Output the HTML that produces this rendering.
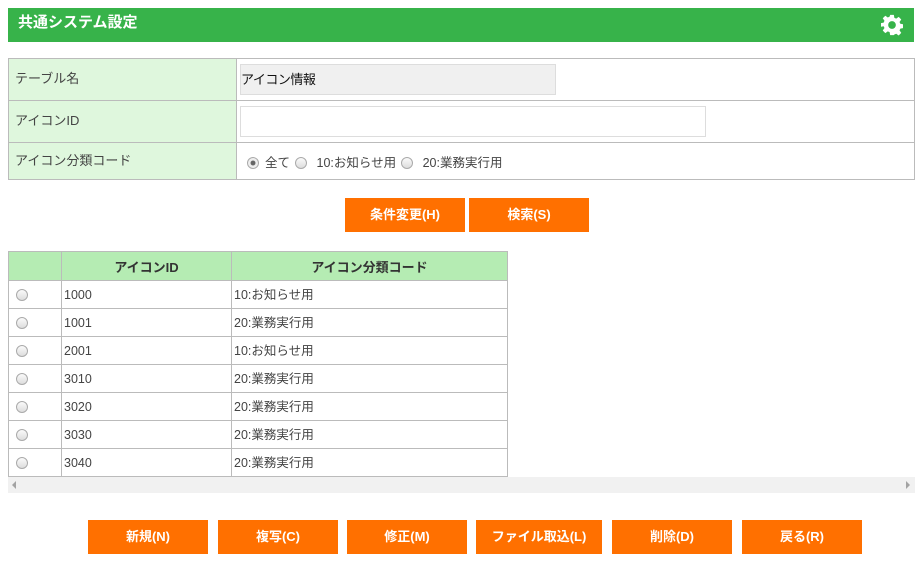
<!DOCTYPE html>
<html><head><meta charset="utf-8"><style>
*{box-sizing:border-box;margin:0;padding:0}
body{width:922px;height:566px;background:#fff;font-family:"Liberation Sans","Noto Sans CJK JP",sans-serif;font-size:13px;color:#333;position:relative;overflow:hidden}
.hdr{position:absolute;left:8px;top:8px;width:906px;height:34px;background:#37b34a;color:#fff;font-weight:bold;font-size:15px;line-height:30px;padding-left:10px}
.abs{position:absolute}
table{border-collapse:collapse}
td,th{border:1px solid #bbb;vertical-align:middle}
.form{position:absolute;left:8px;top:58px;width:907px}
.form td.l{background:#dff7dd;width:228px;padding-left:6px;padding-bottom:4px;font-size:13px;color:#444}
.btn{position:absolute;height:34px;background:#ff7000;color:#fff;font-weight:bold;font-size:13px;text-align:center;line-height:34px}
.res{position:absolute;left:8px;top:251px;width:500px}
.res th{background:#b5ecb3;height:29px;font-size:13px;color:#333}
.res td{height:28px;padding-left:2px;font-size:12.5px;color:#444;line-height:14px}
.rd{display:inline-block;width:12px;height:12px;border-radius:50%;border:1px solid #aaa;background:linear-gradient(#fafafa,#ddd);vertical-align:middle}
.opt{font-size:12.5px;color:#444}
.opt span.t{margin:0 5px 0 6px}
</style></head><body>
<div class="hdr">共通システム設定</div>
<svg class="abs" style="left:881px;top:14px" width="22" height="22" viewBox="0 0 24 24"><path fill="#fff" d="M10 1h4l.6 3.2 2 .9 2.7-1.9 2.8 2.8-1.9 2.7.9 2 3.2.6v4l-3.2.6-.9 2 1.9 2.7-2.8 2.8-2.7-1.9-2 .9L14 23h-4l-.6-3.2-2-.9-2.7 1.9-2.8-2.8 1.9-2.7-.9-2L-.3 14v-4l3.2-.6.9-2L1.9 4.7 4.7 1.9l2.7 1.9 2-.9z"/><circle cx="12" cy="12" r="4.2" fill="#37b34a"/></svg>
<table class="form">
<tr style="height:42px"><td class="l">テーブル名</td><td><div style="margin-left:3px;width:316px;height:31px;background:#f0f0f0;border:1px solid #ddd;line-height:29px;font-size:13px;color:#111;letter-spacing:-0.5px">アイコン情報</div></td></tr>
<tr style="height:42px"><td class="l">アイコンID</td><td><div style="margin-left:3px;width:466px;height:31px;border:1px solid #ddd"></div></td></tr>
<tr style="height:37px"><td class="l">アイコン分類コード</td><td class="opt" style="padding-left:10px"><span class="rd" style="background:radial-gradient(#666 30%,#eee 40%)"></span><span class="t">全て</span><span class="rd"></span><span class="t">&nbsp;10:お知らせ用</span><span class="rd"></span><span class="t">&nbsp;20:業務実行用</span></td></tr>
</table>
<div class="btn" style="left:345px;top:198px;width:120px">条件変更(H)</div>
<div class="btn" style="left:469px;top:198px;width:120px">検索(S)</div>
<table class="res">
<tr><th style="width:53px"></th><th style="width:170px">アイコンID</th><th>アイコン分類コード</th></tr>
<tr><td style="padding-left:7px"><span class="rd"></span></td><td>1000</td><td>10:お知らせ用</td></tr>
<tr><td style="padding-left:7px"><span class="rd"></span></td><td>1001</td><td>20:業務実行用</td></tr>
<tr><td style="padding-left:7px"><span class="rd"></span></td><td>2001</td><td>10:お知らせ用</td></tr>
<tr><td style="padding-left:7px"><span class="rd"></span></td><td>3010</td><td>20:業務実行用</td></tr>
<tr><td style="padding-left:7px"><span class="rd"></span></td><td>3020</td><td>20:業務実行用</td></tr>
<tr><td style="padding-left:7px"><span class="rd"></span></td><td>3030</td><td>20:業務実行用</td></tr>
<tr><td style="padding-left:7px"><span class="rd"></span></td><td>3040</td><td>20:業務実行用</td></tr>
</table>
<div class="abs" style="left:8px;top:477px;width:907px;height:16px;background:#f1f1f1"></div>
<div class="abs" style="left:12px;top:481px;width:0;height:0;border-top:4px solid transparent;border-bottom:4px solid transparent;border-right:4px solid #a3a3a3"></div>
<div class="abs" style="left:906px;top:481px;width:0;height:0;border-top:4px solid transparent;border-bottom:4px solid transparent;border-left:4px solid #a3a3a3"></div>
<div class="btn" style="left:88px;top:520px;width:120px">新規(N)</div>
<div class="btn" style="left:218px;top:520px;width:120px">複写(C)</div>
<div class="btn" style="left:347px;top:520px;width:120px">修正(M)</div>
<div class="btn" style="left:476px;top:520px;width:126px">ファイル取込(L)</div>
<div class="btn" style="left:612px;top:520px;width:120px">削除(D)</div>
<div class="btn" style="left:742px;top:520px;width:120px">戻る(R)</div>
</body></html>
